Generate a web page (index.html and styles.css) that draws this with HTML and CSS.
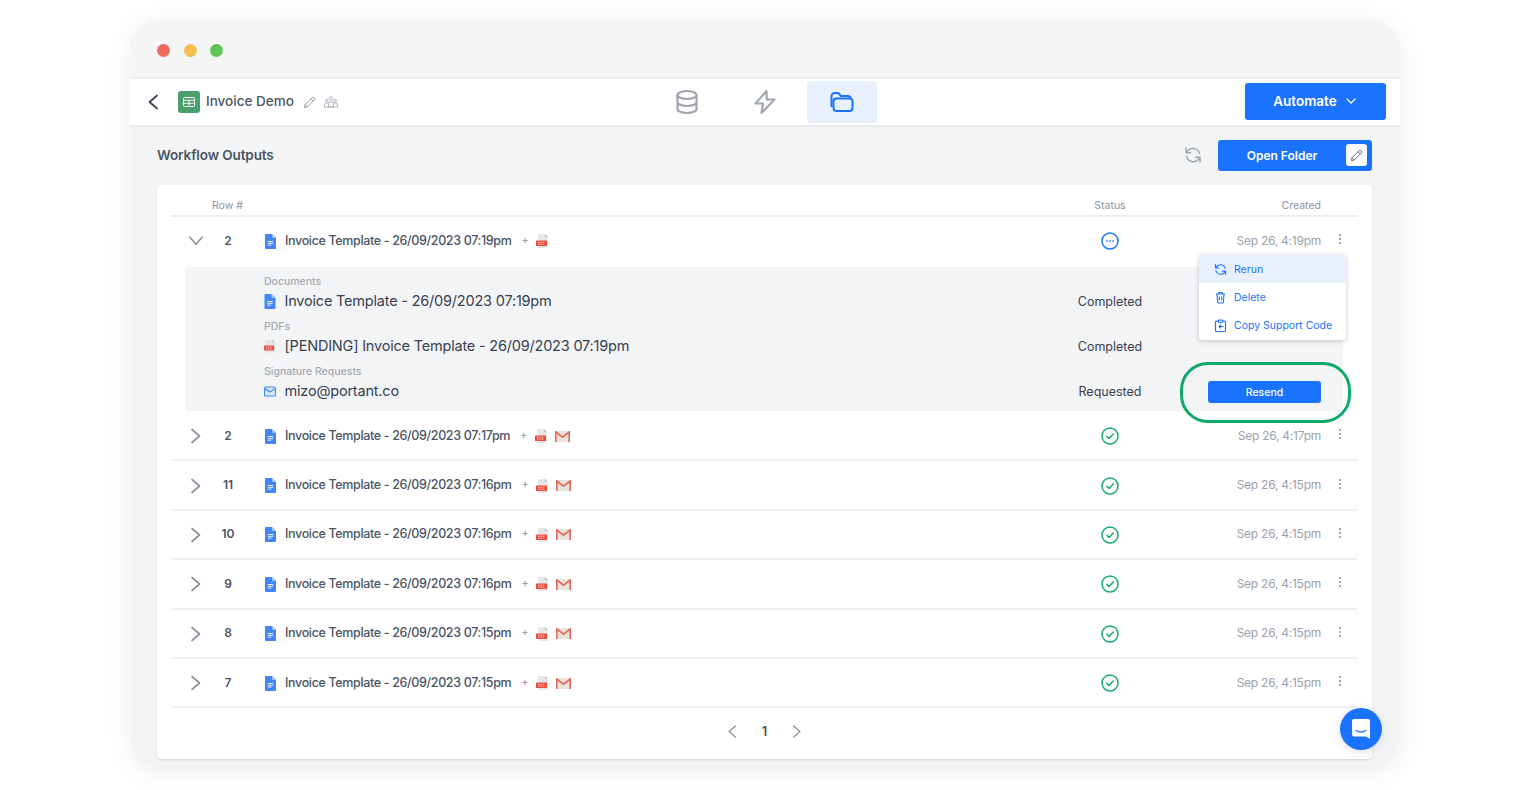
FILE: index.html
```html
<!DOCTYPE html>
<html lang="en">
<head>
<meta charset="utf-8">
<title>Invoice Demo - Workflow Outputs</title>
<link rel="stylesheet" href="styles.css">
</head>
<body>
<svg class="defs" width="0" height="0" aria-hidden="true">
  <symbol id="doc" viewBox="0 0 11 15"><path d="M1 0h6l4 4v10a1 1 0 0 1-1 1H1a1 1 0 0 1-1-1V1a1 1 0 0 1 1-1z" fill="#4285f4"/><path d="M7 0l4 4H8a1 1 0 0 1-1-1z" fill="#a1c2fa"/><path d="M2.800 7.500h5.400M2.800 9.300h5.400M2.800 11.100h3.600" stroke="#fff" stroke-width=".9"/></symbol>
  <symbol id="pdf" viewBox="0 0 13 14"><path d="M2 0h7l3 3v10a1 1 0 0 1-1 1H3a1 1 0 0 1-1-1z" fill="#e6e6e6"/><path d="M9 0l3 3H9z" fill="#c4c4c4"/><rect x="0" y="6.500" width="11" height="5.500" rx=".6" fill="#ea4c3c"/><path d="M2 8.200h7M2 10.200h7" stroke="#fff" stroke-width=".7" stroke-dasharray="1.600 .7"/></symbol>
  <symbol id="gmail" viewBox="0 0 15 11"><rect width="15" height="11" rx="1" fill="#e9e4db"/><path d="M.8 11V1l6.700 5.200L14.200 1v10" fill="none" stroke="#e2685c" stroke-width="1.700"/></symbol>
  <symbol id="ok" viewBox="0 0 18 18"><circle cx="9" cy="9" r="8" fill="none" stroke="#16ac6c" stroke-width="1.500"/><path d="M5.800 9.300l2.300 2.200 4.200-4.500" fill="none" stroke="#16ac6c" stroke-width="1.500" stroke-linecap="round" stroke-linejoin="round"/></symbol>
  <symbol id="right" viewBox="0 0 12 16"><path d="M2 1.500l7.500 6.500L2 14.500" fill="none" stroke="currentColor" stroke-width="1.700" stroke-linecap="round" stroke-linejoin="round"/></symbol>
  <symbol id="kebab" viewBox="0 0 4 12"><circle cx="2" cy="2" r="1.100" fill="#8d94a0"/><circle cx="2" cy="6" r="1.100" fill="#8d94a0"/><circle cx="2" cy="10" r="1.100" fill="#8d94a0"/></symbol>
  <symbol id="pencil" viewBox="0 0 14 14"><path d="M1.500 12.500l.7-3.200L9.800 1.700a1.400 1.400 0 0 1 2 0l.5.500a1.400 1.400 0 0 1 0 2L4.700 11.800zM8.600 3l2.400 2.400M2.200 9.300l2.500 2.500" fill="none" stroke="currentColor" stroke-width="1" stroke-linejoin="round"/></symbol>
  <symbol id="sync" viewBox="0 0 18 18"><path d="M15.500 7.500A6.800 6.800 0 0 0 3.700 4.800L2 6.700M2 2.200v4.500h4.500M2.500 10.500a6.800 6.800 0 0 0 11.800 2.700l1.700-1.900M16 15.800v-4.500h-4.500" fill="none" stroke="currentColor" stroke-width="1.500" stroke-linecap="round" stroke-linejoin="round"/></symbol>
</svg>

<div class="window">
  <div class="titlebar">
    <span class="dot dot-red"></span><span class="dot dot-yellow"></span><span class="dot dot-green"></span>
  </div>

  <header class="nav">
    <div class="nav-left">
      <svg class="back" width="12" height="16"><use href="#right"/></svg>
      <span class="sheet-badge">
        <svg width="12" height="10" viewBox="0 0 12 10"><rect x=".5" y=".5" width="11" height="9" rx="1" fill="none" stroke="#fff"/><path d="M.5 3.300h11M.5 6.300h11M6 3.300v6" stroke="#fff" stroke-width=".9"/></svg>
      </span>
      <span class="app-title">Invoice Demo</span>
      <svg class="nav-pencil" width="13" height="13"><use href="#pencil"/></svg>
      <svg class="nav-team" width="14" height="12" viewBox="0 0 14 12"><g fill="none" stroke="#a3a9b4" stroke-width=".9"><circle cx="7" cy="2.600" r="1.700"/><circle cx="2.800" cy="4.600" r="1.200"/><circle cx="11.200" cy="4.600" r="1.200"/><path d="M4.500 11V7.500q0-1.500 1.500-1.500h2q1.500 0 1.500 1.500V11zM.6 11V8.300q0-1.200 1.200-1.200h2.700M13.400 11V8.300q0-1.200-1.200-1.200H9.500M.6 11h12.800"/></g></svg>
    </div>
    <nav class="tabs">
      <span class="tab">
        <svg width="24" height="26" viewBox="0 0 24 26"><g fill="none" stroke="#a0a6b0" stroke-width="2.200"><ellipse cx="12" cy="6" rx="9.500" ry="4"/><path d="M2.500 6v14c0 2.200 4.200 4 9.500 4s9.500-1.800 9.500-4V6M2.500 13c0 2.200 4.200 4 9.500 4s9.500-1.800 9.500-4"/></g></svg>
      </span>
      <span class="tab">
        <svg width="24" height="26" viewBox="0 0 24 26"><path d="M13.500 2L2.500 14.500H10L8.500 24l13-13.500h-7.800z" fill="none" stroke="#a0a6b0" stroke-width="2.200" stroke-linejoin="round"/></svg>
      </span>
      <span class="tab tab-active">
        <svg width="24" height="20" viewBox="0 0 24 20"><g fill="none" stroke="#1a73ff" stroke-width="2" stroke-linejoin="round"><rect x="3.500" y="6.500" width="19" height="12.500" rx="3"/><path d="M1.500 15V4a3 3 0 0 1 3-3h3.800l2.700 3h7a2.500 2.500 0 0 1 2.500 2.500"/></g></svg>
      </span>
    </nav>
    <div class="nav-right">
      <button class="btn-automate">Automate
        <svg width="10" height="6" viewBox="0 0 10 6"><path d="M1 1l4 4 4-4" fill="none" stroke="#fff" stroke-width="1.200" stroke-linecap="round" stroke-linejoin="round"/></svg>
      </button>
    </div>
  </header>

  <main class="content">
    <div class="content-head">
      <h1 class="heading">Workflow Outputs</h1>
      <svg class="head-sync" width="18" height="18"><use href="#sync"/></svg>
      <button class="btn-folder">
        <span class="btn-folder-label">Open Folder</span>
        <span class="btn-folder-edit"><svg width="13" height="13"><use href="#pencil"/></svg></span>
      </button>
    </div>

    <section class="card">
      <div class="table-head row-grid">
        <span class="th-row">Row #</span>
        <span class="th-status">Status</span>
        <span class="th-created">Created</span>
      </div>

      <div class="row row-first row-grid">
        <svg class="chev chev-down" width="12" height="16"><use href="#right"/></svg>
        <span class="num">2</span>
        <span class="file"><svg width="11" height="15"><use href="#doc"/></svg><span class="file-name">Invoice Template - 26/09/2023 07:19pm</span><span class="plus">+</span><svg width="13" height="14"><use href="#pdf"/></svg></span>
        <span class="status"><svg width="18" height="18" viewBox="0 0 18 18"><circle cx="9" cy="9" r="8" fill="none" stroke="#1a73ff" stroke-width="1.500"/><path d="M5.600 9h.6M8.700 9h.6M11.800 9h.6" stroke="#1a73ff" stroke-width="1.300" stroke-linecap="round"/></svg></span>
        <span class="created">Sep 26, 4:19pm</span>
        <svg class="kebab" width="4" height="12"><use href="#kebab"/></svg>
      </div>

      <div class="details">
        <div class="detail">
          <div class="detail-label">Documents</div>
          <div class="detail-line"><span class="detail-name"><svg width="11" height="15"><use href="#doc"/></svg><span class="detail-text">Invoice Template - 26/09/2023 07:19pm</span></span><span class="detail-status">Completed</span></div>
        </div>
        <div class="detail">
          <div class="detail-label">PDFs</div>
          <div class="detail-line"><span class="detail-name"><svg width="13" height="14"><use href="#pdf"/></svg><span class="detail-text">[PENDING] Invoice Template - 26/09/2023 07:19pm</span></span><span class="detail-status">Completed</span></div>
        </div>
        <div class="detail">
          <div class="detail-label">Signature Requests</div>
          <div class="detail-line"><span class="detail-name"><svg width="13" height="11" viewBox="0 0 13 11"><rect x=".6" y=".6" width="11.800" height="9.800" rx="1.500" fill="#dbe8fe" stroke="#3d87f5" stroke-width="1.200"/><path d="M1.500 2.500l5 3.500 5-3.500" fill="none" stroke="#3d87f5" stroke-width="1.200"/></svg><span class="detail-text">mizo@portant.co</span></span><span class="detail-status">Requested</span><span class="detail-action"><button class="btn-resend">Resend</button></span></div>
        </div>
      </div>

      <div class="row row-grid">
        <svg class="chev" width="12" height="16"><use href="#right"/></svg><span class="num">2</span>
        <span class="file"><svg width="11" height="15"><use href="#doc"/></svg><span class="file-name">Invoice Template - 26/09/2023 07:17pm</span><span class="plus">+</span><svg width="13" height="14"><use href="#pdf"/></svg><svg class="mail" width="15" height="11"><use href="#gmail"/></svg></span>
        <span class="status"><svg width="18" height="18"><use href="#ok"/></svg></span><span class="created">Sep 26, 4:17pm</span><svg class="kebab" width="4" height="12"><use href="#kebab"/></svg>
      </div>
      <div class="row row-grid">
        <svg class="chev" width="12" height="16"><use href="#right"/></svg><span class="num">11</span>
        <span class="file"><svg width="11" height="15"><use href="#doc"/></svg><span class="file-name">Invoice Template - 26/09/2023 07:16pm</span><span class="plus">+</span><svg width="13" height="14"><use href="#pdf"/></svg><svg class="mail" width="15" height="11"><use href="#gmail"/></svg></span>
        <span class="status"><svg width="18" height="18"><use href="#ok"/></svg></span><span class="created">Sep 26, 4:15pm</span><svg class="kebab" width="4" height="12"><use href="#kebab"/></svg>
      </div>
      <div class="row row-grid">
        <svg class="chev" width="12" height="16"><use href="#right"/></svg><span class="num">10</span>
        <span class="file"><svg width="11" height="15"><use href="#doc"/></svg><span class="file-name">Invoice Template - 26/09/2023 07:16pm</span><span class="plus">+</span><svg width="13" height="14"><use href="#pdf"/></svg><svg class="mail" width="15" height="11"><use href="#gmail"/></svg></span>
        <span class="status"><svg width="18" height="18"><use href="#ok"/></svg></span><span class="created">Sep 26, 4:15pm</span><svg class="kebab" width="4" height="12"><use href="#kebab"/></svg>
      </div>
      <div class="row row-grid">
        <svg class="chev" width="12" height="16"><use href="#right"/></svg><span class="num">9</span>
        <span class="file"><svg width="11" height="15"><use href="#doc"/></svg><span class="file-name">Invoice Template - 26/09/2023 07:16pm</span><span class="plus">+</span><svg width="13" height="14"><use href="#pdf"/></svg><svg class="mail" width="15" height="11"><use href="#gmail"/></svg></span>
        <span class="status"><svg width="18" height="18"><use href="#ok"/></svg></span><span class="created">Sep 26, 4:15pm</span><svg class="kebab" width="4" height="12"><use href="#kebab"/></svg>
      </div>
      <div class="row row-grid">
        <svg class="chev" width="12" height="16"><use href="#right"/></svg><span class="num">8</span>
        <span class="file"><svg width="11" height="15"><use href="#doc"/></svg><span class="file-name">Invoice Template - 26/09/2023 07:15pm</span><span class="plus">+</span><svg width="13" height="14"><use href="#pdf"/></svg><svg class="mail" width="15" height="11"><use href="#gmail"/></svg></span>
        <span class="status"><svg width="18" height="18"><use href="#ok"/></svg></span><span class="created">Sep 26, 4:15pm</span><svg class="kebab" width="4" height="12"><use href="#kebab"/></svg>
      </div>
      <div class="row row-grid">
        <svg class="chev" width="12" height="16"><use href="#right"/></svg><span class="num">7</span>
        <span class="file"><svg width="11" height="15"><use href="#doc"/></svg><span class="file-name">Invoice Template - 26/09/2023 07:15pm</span><span class="plus">+</span><svg width="13" height="14"><use href="#pdf"/></svg><svg class="mail" width="15" height="11"><use href="#gmail"/></svg></span>
        <span class="status"><svg width="18" height="18"><use href="#ok"/></svg></span><span class="created">Sep 26, 4:15pm</span><svg class="kebab" width="4" height="12"><use href="#kebab"/></svg>
      </div>

      <div class="pager">
        <svg class="pager-prev" width="10" height="15"><use href="#right"/></svg>
        <span class="pager-num">1</span>
        <svg class="pager-next" width="10" height="15"><use href="#right"/></svg>
      </div>

      <div class="menu">
        <div class="menu-item menu-item-on"><svg width="13" height="13"><use href="#sync"/></svg>Rerun</div>
        <div class="menu-item"><svg width="13" height="13" viewBox="0 0 13 13"><path d="M2 3h9M4.700 3V1.500h3.600V3M3 3l.6 8.200a1 1 0 0 0 1 .8h3.800a1 1 0 0 0 1-.8L10 3M5.300 5.500v4M7.700 5.500v4" fill="none" stroke="#1a73ff" stroke-width="1.100" stroke-linejoin="round"/></svg>Delete</div>
        <div class="menu-item"><svg width="13" height="13" viewBox="0 0 13 13"><path d="M4 2H2.500a1 1 0 0 0-1 1v8.500a1 1 0 0 0 1 1h8a1 1 0 0 0 1-1V3a1 1 0 0 0-1-1H9M4.500 1h4v2.200h-4zM9.500 7.500H5M6.800 5.700L5 7.500l1.800 1.800" fill="none" stroke="#1a73ff" stroke-width="1.100" stroke-linejoin="round"/></svg>Copy Support Code</div>
      </div>
      <div class="highlight-ring"></div>
    </section>
  </main>

  <span class="chat">
    <svg width="20" height="22" viewBox="0 0 20 22"><path d="M3 1h14a2 2 0 0 1 2 2v18l-4-2.500H3a2 2 0 0 1-2-2V3a2 2 0 0 1 2-2z" fill="#fff"/><path d="M5 12.500q5 3 10 0" fill="none" stroke="#1a73ff" stroke-width="1.300" stroke-linecap="round"/></svg>
  </span>
</div>
</body>
</html>
```

FILE: styles.css
```css
* { box-sizing: border-box; }
html, body { margin: 0; padding: 0; height: 100%; overflow: hidden; background: #fff; }
body { font-family: "Inter", "Liberation Sans", sans-serif; color: #4b5563; padding: 20px 0 0 130px; }
.defs { position: absolute; }
svg { display: block; flex: none; }
button { font: inherit; border: 0; cursor: pointer; }

.window {
  position: relative;
  width: 1270px;
  height: 748px;
  border-radius: 30px;
  background: #f3f4f6;
  box-shadow: 0 4px 24px rgba(60, 70, 90, .09);
}

.titlebar { display: flex; align-items: center; gap: 13.500px; height: 57px; padding: 3px 0 0 27px; background: #f5f5f5; border-radius: 30px 30px 0 0; }
.dot { width: 13px; height: 13px; border-radius: 50%; }
.dot-red { background: #ee6a5f; }
.dot-yellow { background: #f5bd4f; }
.dot-green { background: #61c454; }

.nav {
  display: grid;
  grid-template-columns: 1fr auto 1fr;
  align-items: center;
  height: 50px;
  background: #fff;
  border-top: 2px solid #ececee;
  border-bottom: 2px solid #e8e9ec;
}
.nav-left { display: flex; align-items: center; padding-left: 17px; }
.back { transform: scaleX(-1); color: #374151; }
.sheet-badge { display: flex; align-items: center; justify-content: center; width: 22px; height: 22px; margin-left: 19px; border-radius: 3px; background: #4c9f6c; }
.app-title { margin: -2px 0 0 6px; font-size: 13.500px; font-weight: 500; color: #4b5563; }
.nav-pencil { margin-left: 9px; color: #8d94a0; }
.nav-team { margin-left: 8px; }
.tabs { display: flex; gap: 7.500px; margin-left: -1px; }
.tab { display: flex; align-items: center; justify-content: center; width: 70px; height: 42px; border-radius: 4px; }
.tab-active { background: #e8f0fe; }
.nav-right { display: flex; justify-content: flex-end; padding-right: 14px; margin-top: -2px; }
.btn-automate { display: flex; align-items: center; justify-content: center; gap: 9px; width: 141px; height: 37px; padding-right: 8px; border-radius: 3px; background: #1a73ff; color: #fff; font-size: 13.500px; font-weight: 600; }

.content { padding: 0 28px 0 27px; }
.content-head { display: flex; align-items: center; height: 58px; padding-bottom: 2px; }
.heading { margin: 0 auto 0 0; font-size: 13.500px; font-weight: 600; letter-spacing: -.1px; color: #4b5563; }
.head-sync { margin-right: 16px; color: #a0a6b0; }
.btn-folder { position: relative; display: flex; align-items: center; width: 154px; height: 31px; padding: 0 5px 0 0; border-radius: 3px; background: #1a73ff; color: #fff; font-size: 12px; font-weight: 600; }
.btn-folder-label { flex: 1; text-align: center; }
.btn-folder-edit { display: flex; align-items: center; justify-content: center; width: 21px; height: 22px; border-radius: 3px; background: #fff; color: #5b6270; }

.card { position: relative; height: 574px; padding: 0 14px; border-radius: 4px; background: #fff; box-shadow: 0 1px 2px rgba(60, 70, 90, .18); }
.row-grid { display: grid; grid-template-columns: 50px 14px 1fr 100px 161px 37px; align-items: center; }
.table-head { height: 32px; padding-top: 10px; border-bottom: 2px solid #eceef1; font-size: 10.500px; color: #8d94a0; }
.th-row { grid-column: 1 / 4; padding-left: 41px; }
.th-status { grid-column: 4; text-align: center; }
.th-created { grid-column: 5; text-align: right; }

.row { height: 49.400px; padding-top: 1px; border-bottom: 2px solid #f0f1f4; }
.row-first { height: 48px; margin-bottom: 2px; padding-top: 0; border-bottom: 0; }
.chev { justify-self: center; color: #8d94a0; }
.chev-down { transform: rotate(90deg) scale(.95); }
.num { margin-top: -2px; font-size: 12px; font-weight: 600; color: #4b5563; text-align: center; white-space: nowrap; }
.file { display: flex; align-items: center; padding-left: 30px; }
.file-name { margin: -2px 0 0 9px; font-size: 12.500px; font-weight: 500; letter-spacing: -.35px; color: #4b5563; white-space: nowrap; }
.plus { width: 6px; margin: -2px 9px 0 10px; font-size: 11px; line-height: 1; text-align: center; color: #8d94a0; }
.mail { margin-left: 7px; }
.status { display: flex; justify-content: center; }
.created { margin-top: -2px; font-size: 12px; letter-spacing: -.25px; color: #9aa1ac; text-align: right; }
.kebab { justify-self: center; margin-bottom: 4px; }

.details { height: 144px; margin: 0 15px 1px 14px; padding: 7px 22px 0 79px; border-radius: 4px; background: #f3f4f6; }
.detail { height: 45px; }
.detail-label { height: 15px; font-size: 10.500px; font-weight: 500; line-height: 15px; color: #a3a9b4; }
.detail-line { display: grid; grid-template-columns: 1fr 100px 161px; align-items: center; height: 24px; }
.detail-name { display: flex; align-items: center; gap: 8.500px; font-size: 14.500px; letter-spacing: -.2px; color: #374151; white-space: nowrap; }
.detail-name svg { width: 12px; }
.detail-text { margin-top: -2px; }
.detail-status { font-size: 12.500px; color: #374151; text-align: center; white-space: nowrap; }
.detail-action { display: flex; justify-content: flex-end; padding-top: 2px; }
.btn-resend { width: 113px; height: 22px; border-radius: 3px; background: #1a73ff; color: #fff; font-size: 10.500px; font-weight: 500; }

.pager { display: flex; align-items: center; justify-content: center; gap: 25px; height: 46px; }
.pager-prev { transform: scaleX(-1); color: #8d94a0; }
.pager-next { color: #8d94a0; }
.pager-num { font-size: 13px; font-weight: 600; color: #4b5563; }

.menu { position: absolute; top: 70px; right: 26px; width: 147px; height: 85px; border-radius: 3px; background: #fff; box-shadow: 0 1px 5px rgba(60, 70, 90, .28); color: #1a73ff; font-size: 10.500px; }
.menu-item { display: flex; align-items: center; gap: 7px; height: 28px; padding-left: 15px; }
.menu-item-on { background: #e8f0fe; border-radius: 3px 3px 0 0; }
.highlight-ring { position: absolute; top: 177px; left: 1023px; width: 171px; height: 61px; border: 3px solid #0fa968; border-radius: 28px; pointer-events: none; }

.chat { position: absolute; top: 688px; left: 1210px; display: flex; align-items: center; justify-content: center; width: 42px; height: 42px; border-radius: 50%; background: #1a73ff; box-shadow: 0 2px 10px rgba(30, 60, 120, .15); }
```
